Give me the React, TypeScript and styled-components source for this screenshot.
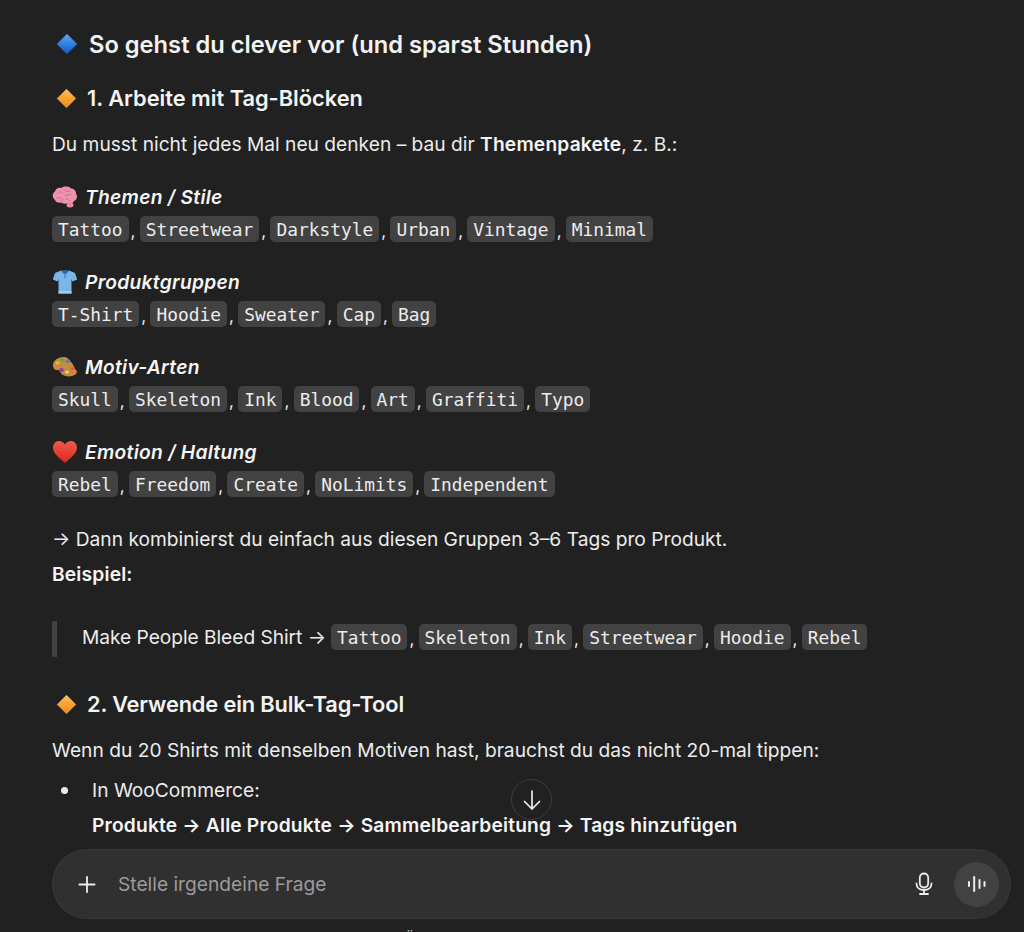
import React from "react";
import styled, { createGlobalStyle } from "styled-components";
import { Plus } from "lucide-react";

const Global = createGlobalStyle`
  html, body { margin: 0; padding: 0; height: 100%; background: #212121; }
  body { overflow: hidden; }
`;

const Page = styled.div`
  position: relative;
  width: 1024px;
  height: 932px;
  overflow: hidden;
  background: #212121;
  color: #ececec;
  font-family: Inter, "Liberation Sans", sans-serif;
  font-size: 19.2px;
`;

const Article = styled.article`
  padding: 26px 24px 0 52px;
`;

const H2 = styled.h2`
  display: flex;
  align-items: center;
  gap: 11px;
  margin: 0 0 0 4px;
  height: 36px;
  font-size: 23.7px;
  font-weight: 600;
  color: #f3f3f3;
`;

const H3 = styled.h3<{ $top: number; $tracking?: number }>`
  display: flex;
  align-items: center;
  gap: 10px;
  margin: ${(p) => p.$top}px 0 0 4px;
  height: 32px;
  font-size: 21.8px;
  font-weight: 600;
  letter-spacing: ${(p) => p.$tracking ?? 0}px;
  color: #f3f3f3;
`;

const Para = styled.p<{ $top: number }>`
  margin: ${(p) => p.$top}px 0 0;
  line-height: 32px;
  height: 32px;
  white-space: nowrap;
`;

const Strong = styled.strong`
  font-weight: 600;
  letter-spacing: 0.18px;
  color: #f5f5f5;
`;

const Group = styled.div`
  margin-top: 21px;
`;

const Label = styled.div`
  display: flex;
  align-items: center;
  gap: 7px;
  height: 32px;
  font-style: italic;
  font-weight: 600;
  letter-spacing: 0.3px;
  color: #f5f5f5;
`;

const TagRow = styled.div`
  display: flex;
  align-items: center;
  height: 32px;
  white-space: pre;
`;

const Code = styled.code`
  display: inline-block;
  height: 26px;
  line-height: 27px;
  padding: 0 6px;
  border-radius: 5px;
  background: #424242;
  color: #ececec;
  font-family: "DejaVu Sans Mono", "Liberation Mono", monospace;
  font-size: 17.86px;
`;

const Comma = styled.span`
  display: inline-block;
  width: 11.2px;
  padding-left: 2px;
  box-sizing: border-box;
  font-size: 17px;
  position: relative;
  top: 2px;
`;

const Quote = styled.blockquote`
  display: flex;
  align-items: center;
  box-sizing: border-box;
  height: 36px;
  margin: 31px 0 0;
  padding: 0 0 4px 25px;
  border-left: 5px solid #424242;
  border-radius: 2px;
  white-space: pre;
`;

const QuoteText = styled.span`
  margin-right: 5px;
  letter-spacing: -0.05px;
`;

const List = styled.ul`
  margin: 7px 0 0;
  padding: 0 0 0 40px;
  list-style: none;
`;

const Item = styled.li`
  position: relative;
  line-height: 35px;
  white-space: nowrap;
  &::before {
    content: "";
    position: absolute;
    left: -31px;
    top: 14px;
    width: 7px;
    height: 7px;
    border-radius: 50%;
    background: #ececec;
  }
`;

const ScrollDown = styled.button`
  position: absolute;
  left: 511px;
  top: 779px;
  width: 41px;
  height: 41px;
  display: flex;
  align-items: center;
  justify-content: center;
  padding: 0;
  border: 1px solid #3d3d3d;
  border-radius: 50%;
  background: #212121;
  color: #ececec;
`;

const Composer = styled.div`
  position: absolute;
  left: 52px;
  top: 849px;
  width: 959px;
  height: 70px;
  box-sizing: border-box;
  display: flex;
  align-items: center;
  padding: 0 12px 0 22px;
  border-radius: 35px;
  background: #303030;
  box-shadow: inset 0 0 0 1px #373737;
`;

const PlusButton = styled.span`
  display: flex;
  color: #ececec;
  width: 26px;
  justify-content: center;
`;

const Placeholder = styled.span`
  flex: 1;
  margin-left: 18px;
  color: #9b9b9b;
`;

const MicIcon = styled.svg`
  margin-right: 18px;
  color: #ececec;
`;

const VoiceButton = styled.span`
  width: 45px;
  height: 45px;
  border-radius: 50%;
  background: #424242;
  display: flex;
  align-items: center;
  justify-content: center;
  color: #ececec;
`;

const Disclaimer = styled.div`
  position: absolute;
  left: 52px;
  width: 959px;
  box-sizing: border-box;
  padding-right: 14px;
  top: 929px;
  text-align: center;
  font-size: 14.4px;
  line-height: 20px;
  color: #b4b4b4;
  white-space: nowrap;
`;

const EmojiBox = styled.svg`
  flex: none;
`;

const Diamond = ({ blue, size }: { blue?: boolean; size: number }) => {
  const id = blue ? "dblue" : "dorange";
  return (
    <EmojiBox width={size} height={size} viewBox="0 0 24 24">
      <defs>
        <linearGradient id={id} x1="0" y1="0" x2="0" y2="1">
          <stop offset="0" stopColor={blue ? "#5aa9f2" : "#fbc05a"} />
          <stop offset="0.5" stopColor={blue ? "#2f7fe0" : "#f9a030"} />
          <stop offset="1" stopColor={blue ? "#1a5cc0" : "#ee8a20"} />
        </linearGradient>
      </defs>
      <path d="M12 1.500 L22.500 12 L12 22.500 L1.500 12 Z" fill={`url(#${id})`} stroke={`url(#${id})`} strokeWidth="1" strokeLinejoin="round" />
    </EmojiBox>
  );
};

const Brain = () => (
  <EmojiBox width="26" height="24" viewBox="0 0 26 24">
    <path d="M3 15C0 13 0 8 3 6.500 3.500 3.500 7 2 9.500 3 12 1 17 1 19 3.500c3 0 5.500 2.500 5 5.500 2 2 1 6-2 7-1 2.500-4 3-6 2-2 1-5 1-7-.5C6 18 3.500 17 3 15Z" fill="#ee93ad" />
    <path d="M6 8c2-2 4-1 5 0M13 5c1 2 3 2 5 1M5 13c2-1 4-1 5 1M13 10c2 1 4 0 6-1M14 14c2 0 3 1 4 2M9 17c1-1 2-2 2-3" stroke="#cf6e8c" strokeWidth="1" fill="none" strokeLinecap="round" />
    <ellipse cx="18" cy="20" rx="3.500" ry="2.500" fill="#e58aa3" />
  </EmojiBox>
);

const Shirt = () => (
  <EmojiBox width="26" height="26" viewBox="0 0 26 26">
    <path d="M9 1.500 3 4 .8 10.500 5.500 12.500 6.500 10v14.500h13V10l1 2.500 4.700-2L23 4l-6-2.500c-1 1.500-7 1.500-8 0Z" fill="#7cb6e8" />
    <path d="M9 1.500c1 2 2.500 3 4 4 1.500-1 3-2 4-4-1.500-.5-6.500-.5-8 0Z" fill="#2f6cab" />
    <path d="M13 5.500v4" stroke="#3f7fbe" strokeWidth="1.200" />
    <path d="M6.500 22h13v2.500h-13Z" fill="#9ccbf0" />
  </EmojiBox>
);

const Palette = () => (
  <EmojiBox width="26" height="22" viewBox="0 0 26 22">
    <path d="M12 1C5 1 .5 5.500 1 10c.5 4 3 4 5 4s2 3 5 5c3 2 10 2 13-1 1.500-2 1-4-1-5-1-3-2-5-4-7C17 3 15 1 12 1Z" fill="#c88a3c" />
    <ellipse cx="5.500" cy="7" rx="2" ry="1.600" fill="#e8b93e" />
    <ellipse cx="10" cy="4" rx="2" ry="1.600" fill="#4bb04f" />
    <ellipse cx="15.500" cy="5.500" rx="2" ry="1.600" fill="#3b86d8" />
    <ellipse cx="9.500" cy="14" rx="2.300" ry="2" fill="#8a3fb5" />
    <ellipse cx="15" cy="16" rx="2" ry="1.600" fill="#e8d56a" />
    <ellipse cx="21" cy="12.500" rx="2" ry="1.700" fill="#e2574c" />
  </EmojiBox>
);

const Heart = () => (
  <EmojiBox width="26" height="24" viewBox="0 0 26 24">
    <defs>
      <linearGradient id="hrt" x1="0" y1="0" x2="0" y2="1">
        <stop offset="0" stopColor="#f2584e" />
        <stop offset="1" stopColor="#d9281e" />
      </linearGradient>
    </defs>
    <path d="M13 23C6 17 1 13 1 7.500 1 3.500 4 1 7 1c2.500 0 4.700 1.300 6 3.500C14.300 2.300 16.500 1 19 1c3 0 6 2.500 6 6.500C25 13 20 17 13 23Z" fill="url(#hrt)" />
  </EmojiBox>
);

const groups = [
  { icon: <Brain />, title: "Themen / Stile", tags: ["Tattoo", "Streetwear", "Darkstyle", "Urban", "Vintage", "Minimal"] },
  { icon: <Shirt />, title: "Produktgruppen", tags: ["T-Shirt", "Hoodie", "Sweater", "Cap", "Bag"] },
  { icon: <Palette />, title: "Motiv-Arten", tags: ["Skull", "Skeleton", "Ink", "Blood", "Art", "Graffiti", "Typo"] },
  { icon: <Heart />, title: "Emotion / Haltung", tags: ["Rebel", "Freedom", "Create", "NoLimits", "Independent"] },
];

const Tags = ({ tags }: { tags: string[] }) => (
  <>
    {tags.map((t, i) => (
      <React.Fragment key={t}>
        <Code>{t}</Code>
        {i < tags.length - 1 && <Comma>,</Comma>}
      </React.Fragment>
    ))}
  </>
);

export default function App() {
  return (
    <Page>
      <Global />
      <Article>
        <H2>
          <Diamond blue size={22} />
          So gehst du clever vor (und sparst Stunden)
        </H2>
        <H3 $top={20}>
          <Diamond size={21} />
          1. Arbeite mit Tag-Blöcken
        </H3>
        <Para $top={14}>
          Du musst nicht jedes Mal neu denken – bau dir <Strong>Themenpakete</Strong>, z. B.:
        </Para>
        {groups.map((g) => (
          <Group key={g.title}>
            <Label>
              {g.icon}
              {g.title}
            </Label>
            <TagRow>
              <Tags tags={g.tags} />
            </TagRow>
          </Group>
        ))}
        <Para $top={23}>→ Dann kombinierst du einfach aus diesen Gruppen 3–6 Tags pro Produkt.</Para>
        <Para $top={3}>
          <Strong>Beispiel:</Strong>
        </Para>
        <Quote>
          <QuoteText>Make People Bleed Shirt →</QuoteText>
          <Tags tags={["Tattoo", "Skeleton", "Ink", "Streetwear", "Hoodie", "Rebel"]} />
        </Quote>
        <H3 $top={31} $tracking={-0.14}>
          <Diamond size={21} />
          2. Verwende ein Bulk-Tag-Tool
        </H3>
        <Para $top={14}>Wenn du 20 Shirts mit denselben Motiven hast, brauchst du das nicht 20-mal tippen:</Para>
        <List>
          <Item>
            In WooCommerce:
            <br />
            <Strong>Produkte → Alle Produkte → Sammelbearbeitung → Tags hinzufügen</Strong>
          </Item>
        </List>
      </Article>
      <ScrollDown aria-label="Nach unten">
        <svg width="24" height="24" viewBox="0 0 24 24" fill="none" stroke="currentColor" strokeWidth="1.700" strokeLinecap="round" strokeLinejoin="round">
          <path d="M12 3v18M4.500 13.500 12 21l7.500-7.500" />
        </svg>
      </ScrollDown>
      <Composer>
        <PlusButton>
          <Plus size={27} strokeWidth={1.7} />
        </PlusButton>
        <Placeholder>Stelle irgendeine Frage</Placeholder>
        <MicIcon width="24" height="24" viewBox="0 0 24 24" fill="none" stroke="currentColor" strokeWidth="1.800" strokeLinecap="round">
          <rect x="7.800" y="1.500" width="8.400" height="14" rx="4.200" />
          <path d="M4.500 11.500c0 4 3.300 6.500 7.500 6.500s7.500-2.500 7.500-6.500" />
          <path d="M12 18v4M8 22h8" />
        </MicIcon>
        <VoiceButton>
          <svg width="22" height="22" viewBox="0 0 22 22" fill="none" stroke="currentColor" strokeWidth="2" strokeLinecap="round">
            <path d="M3 9v4M8.200 4v14M13.500 7v8M18.500 9v4" />
          </svg>
        </VoiceButton>
      </Composer>
      <Disclaimer>ChatGPT kann Fehler machen. Überprüfe wichtige Informationen. Siehe Cookie-Voreinstellungen.</Disclaimer>
    </Page>
  );
}
